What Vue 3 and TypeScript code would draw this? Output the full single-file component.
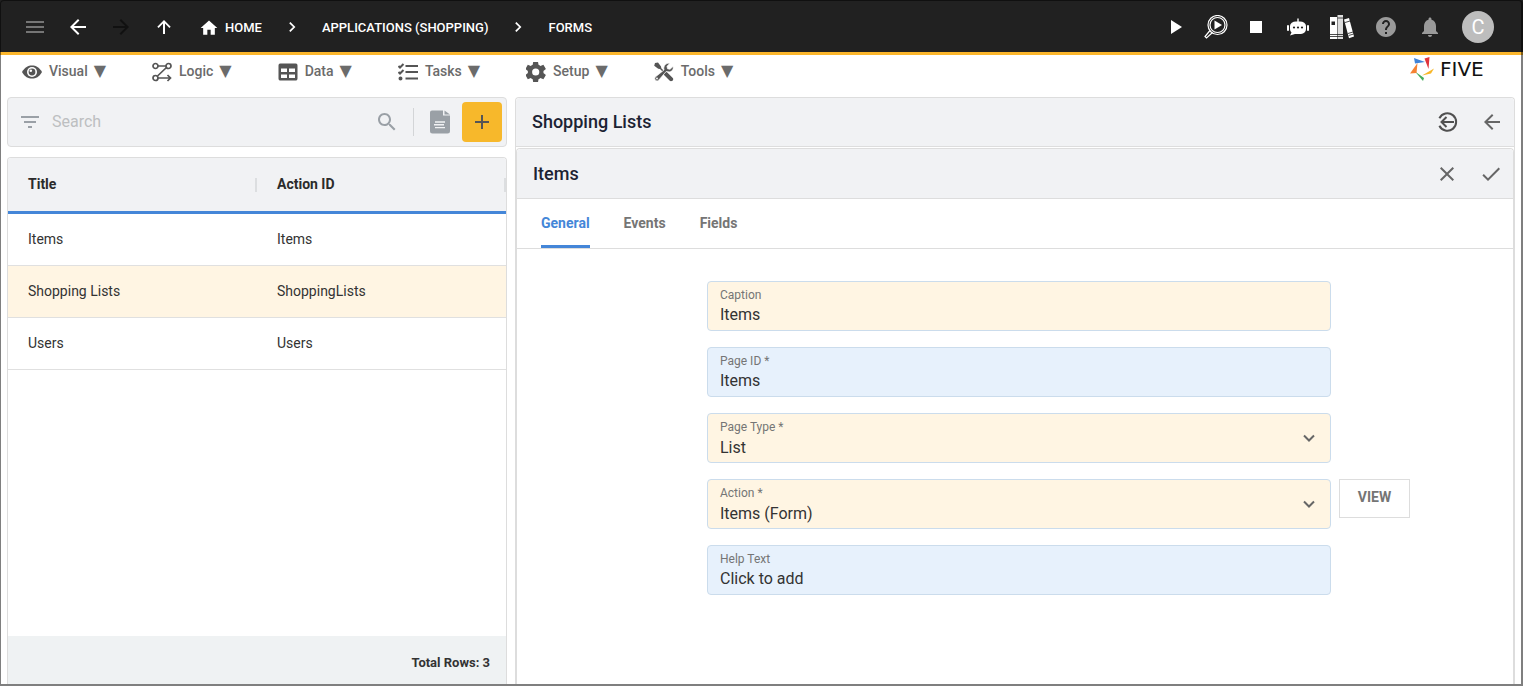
<script setup lang="ts">
import { ref } from 'vue'

interface Row { title: string; actionId: string }
interface MenuItem { label: string; icon: string }

const menus: MenuItem[] = [
  { label: 'Visual', icon: 'eye' },
  { label: 'Logic', icon: 'flow' },
  { label: 'Data', icon: 'grid' },
  { label: 'Tasks', icon: 'tasks' },
  { label: 'Setup', icon: 'gear' },
  { label: 'Tools', icon: 'tools' },
]
const rows: Row[] = [
  { title: 'Items', actionId: 'Items' },
  { title: 'Shopping Lists', actionId: 'ShoppingLists' },
  { title: 'Users', actionId: 'Users' },
]
const tabs = ['General', 'Events', 'Fields']
const selected = ref(1)
const activeTab = ref('General')
const search = ref('')
const caption = ref('Items')
const pageId = ref('Items')
const pageType = ref('List')
const action = ref('Items (Form)')
const helpText = ref('Click to add')
</script>

<template>
  <div class="app">
    <header class="topbar">
      <nav class="nav" aria-label="Navigation">
        <button class="icon-btn dim" aria-label="Menu">
          <svg viewBox="0 0 24 24"><path d="M3 18h18v-2H3v2zm0-5h18v-2H3v2zm0-7v2h18V6H3z" /></svg>
        </button>
        <button class="icon-btn" aria-label="Back">
          <svg viewBox="0 0 24 24"><path d="M20 11H7.800l5.600-5.600L12 4l-8 8 8 8 1.400-1.400L7.800 13H20z" /></svg>
        </button>
        <button class="icon-btn disabled" aria-label="Forward">
          <svg viewBox="0 0 24 24"><path d="M12 4l-1.400 1.400 5.600 5.600H4v2h12.200l-5.600 5.600L12 20l8-8z" /></svg>
        </button>
        <button class="icon-btn" aria-label="Up">
          <svg viewBox="0 0 24 24"><path d="M5.300 11.700l1.300 1.300L11 8.600V19h2V8.600l4.400 4.400 1.300-1.300L12 5z" /></svg>
        </button>
        <ol class="crumbs">
          <li>
            <a href="#" class="home">
              <svg viewBox="0 0 24 24"><path d="M10 20v-6h4v6h5v-8h3L12 3 2 12h3v8z" /></svg>HOME
            </a>
          </li>
          <li><svg class="sep" viewBox="0 0 16 16"><path d="M5.500 3L10.500 8l-5 5" /></svg><a href="#">APPLICATIONS (SHOPPING)</a></li>
          <li><svg class="sep" viewBox="0 0 16 16"><path d="M5.500 3L10.500 8l-5 5" /></svg><a href="#">FORMS</a></li>
        </ol>
      </nav>
      <div class="actions">
        <div class="run-group">
          <button class="icon-btn" aria-label="Run"><svg viewBox="0 0 24 24"><path d="M7 5v14l11-7z" /></svg></button>
          <button class="icon-btn" aria-label="Inspect">
            <svg viewBox="0 0 24 24" class="line">
              <circle cx="13.500" cy="10" r="9.500" /><circle cx="13.500" cy="10" r="7.500" />
              <path d="M6 15.500L1 21.500l1.500 1.500 6-5.500" /><path d="M10.500 5.500v9l7.500-4.500z" class="solid" />
            </svg>
          </button>
          <button class="icon-btn" aria-label="Stop"><svg viewBox="0 0 24 24"><path d="M6 6h12v12H6z" /></svg></button>
        </div>
        <div class="tool-group">
          <button class="icon-btn" aria-label="Assistant">
            <svg viewBox="0 0 24 24">
              <path d="M11.300 3.500h1.400v3.500h-1.400z" /><path d="M4 11a6 4.500 0 0 1 6-4.500h4a6 4.500 0 0 1 6 4.500v3a5 5 0 0 1-5 5H9l-5 1.500 1.500-3A5 5 0 0 1 4 14z" />
              <rect x="1" y="10" width="2" height="6" rx="1" /><rect x="21" y="10" width="2" height="6" rx="1" />
              <g fill="#212121"><circle cx="8" cy="12.500" r="1.100" /><circle cx="12" cy="12.500" r="1.100" /><circle cx="16" cy="12.500" r="1.100" /></g>
            </svg>
          </button>
          <button class="icon-btn" aria-label="Library">
            <svg viewBox="0 0 24 24">
              <path d="M0 2h7v22H0z" /><path d="M7.500 0h5.500v24H7.500z" fill="#dedede" /><path d="M14 4.500l5-1.500 5 18.500-5 1.700z" />
              <path d="M1.500 6.500h3.500v3.500h-3.500z" fill="#212121" />
              <path d="M0 19.500h13M0 21.500h13M7.500 3h5.500M15 7.500l5-1.500M18 18.500l5-1.500M18.700 20.500l5-1.500" stroke="#212121" stroke-width=".8" fill="none" />
            </svg>
          </button>
          <button class="icon-btn gray" aria-label="Help">
            <svg viewBox="0 0 24 24"><path d="M12 2C6.480 2 2 6.480 2 12s4.480 10 10 10 10-4.480 10-10S17.520 2 12 2zm1 17h-2v-2h2v2zm2.070-7.750l-.9.920C13.450 12.900 13 13.500 13 15h-2v-.5c0-1.100.45-2.100 1.170-2.830l1.240-1.260c.37-.36.59-.86.59-1.410 0-1.100-.9-2-2-2s-2 .9-2 2H8c0-2.210 1.790-4 4-4s4 1.790 4 4c0 .88-.36 1.680-.93 2.250z" /></svg>
          </button>
          <button class="icon-btn gray" aria-label="Notifications">
            <svg viewBox="0 0 24 24"><path d="M12 22c1.100 0 2-.9 2-2h-4c0 1.100.89 2 2 2zm6-6v-5c0-3.070-1.640-5.640-4.500-6.320V4c0-.83-.67-1.500-1.500-1.500s-1.500.67-1.500 1.500v.68C7.630 5.360 6 7.920 6 11v5l-2 2v1h16v-1l-2-2z" /></svg>
          </button>
          <button class="avatar" aria-label="Account">C</button>
        </div>
      </div>
    </header>

    <div class="menubar">
      <nav class="menus" aria-label="Main menu">
        <button v-for="m in menus" :key="m.label" class="menu">
          <svg v-if="m.icon === 'eye'" viewBox="0 0 20 20">
            <path d="M0 10C3 5 6 3.500 10 3.500S17 5 20 10c-3 5-6 6.500-10 6.500S3 15 0 10z" />
            <circle cx="10" cy="10" r="5" fill="#fff" /><circle cx="10" cy="10" r="3.400" /><circle cx="8.800" cy="8.800" r="1.300" fill="#fff" />
          </svg>
          <svg v-else-if="m.icon === 'flow'" viewBox="0 0 20 20" class="stroke thin">
            <circle cx="3.500" cy="4" r="2.500" /><circle cx="16.500" cy="4" r="2.500" /><circle cx="3.500" cy="16" r="2.500" />
            <path d="M6 4h8M14.500 5.500L5.500 14M6 16h12M15.500 13l3 3-3 3" />
          </svg>
          <svg v-else-if="m.icon === 'grid'" viewBox="0 0 20 20">
            <path fill-rule="evenodd" d="M3 1.500h14a2 2 0 0 1 2.500 2v13a2 2 0 0 1-2.500 2H3a2 2 0 0 1-2.500-2v-13A2 2 0 0 1 3 1.500zM3 6.500v3.500h6V6.500zm8 0v3.500h6V6.500zM3 12.500V16h6v-3.500zm8 0V16h6v-3.500z" />
          </svg>
          <svg v-else-if="m.icon === 'tasks'" viewBox="0 0 20 20" class="stroke">
            <path d="M7.500 4H20M7.500 10H20M7.500 16.500H20" /><path d="M.5 4l1.500 1.500L5.500 2M.5 10l1.500 1.500L5.500 8" /><circle cx="2.500" cy="16.500" r="1" />
          </svg>
          <svg v-else-if="m.icon === 'gear'" viewBox="2 2 20 20">
            <path d="M19.500 12c0-.4 0-.7-.1-1l2.500-2-2.500-4.300-3 1.200c-.6-.5-1.200-.8-1.900-1.100L14 1.800h-4.800l-.5 3c-.7.300-1.300.6-1.900 1.100l-3-1.200L1.400 9l2.500 2a8 8 0 0 0 0 2l-2.500 2 2.400 4.300 3-1.200c.6.5 1.200.8 1.900 1.100l.5 3H14l.5-3c.7-.3 1.300-.6 1.900-1.100l3 1.200 2.500-4.300-2.500-2c.1-.3.100-.6.100-1zm-7.800 3.600a3.600 3.600 0 1 1 0-7.200 3.600 3.600 0 0 1 0 7.200z" />
          </svg>
          <svg v-else viewBox="0 0 20 20">
            <path d="M1 1l3-.5 3 4 .3 1.800 4 4 1.500-.3 6 6c1.500 2-1.300 4-3 2.800l-6-6 .2-1.700-4-4-1.800-.3-4-3z" />
            <path d="M19 4.500c1 3-1.500 6-4.800 5.300l-2-.3L4.800 18c-1.800 2.500-5.500-.7-3.500-3L10 8c-1-4 2-7.500 5.700-6.500L13 4.300l.5 2.500 2.500.5z" stroke="#fff" stroke-width=".7" />
            <circle cx="3" cy="16.500" r=".9" fill="#fff" />
          </svg>
          <span class="label">{{ m.label }}<span class="arrow">▼</span></span>
        </button>
      </nav>
      <div class="brand">
        <svg viewBox="0 0 24 24" aria-hidden="true">
          <path d="M4 1l11 4-10 1.500z" fill="#3f83d8" /><path d="M14.500 1.500L19.500 0l-1 12z" fill="#e0343c" />
          <path d="M24 11.500l-3 5-9 2z" fill="#f8b729" /><path d="M5 14.500l9 6.500-1 3z" fill="#42ab5b" /><path d="M7.500 6L6.500 16l-6.500.5z" fill="#f58233" />
        </svg>
        <span>FIVE</span>
      </div>
    </div>

    <main class="workspace">
      <section class="list">
        <div class="searchbar">
          <svg class="filter" viewBox="0 0 24 24"><path d="M10 18h4v-2h-4v2zM3 6v2h18V6H3zm3 7h12v-2H6v2z" /></svg>
          <input v-model="search" type="search" placeholder="Search" aria-label="Search" />
          <button class="icon-btn find" aria-label="Find">
            <svg viewBox="0 0 24 24"><path d="M15.500 14h-.79l-.28-.27C15.410 12.590 16 11.110 16 9.500 16 5.910 13.090 3 9.500 3S3 5.910 3 9.500 5.910 16 9.500 16c1.610 0 3.090-.59 4.230-1.570l.27.28v.79l5 4.990L20.490 19l-4.990-5zm-6 0C7.010 14 5 11.990 5 9.500S7.010 5 9.500 5 14 7.010 14 9.500 11.990 14 9.500 14z" /></svg>
          </button>
          <span class="divider"></span>
          <button class="icon-btn doc" aria-label="Document">
            <svg viewBox="0 0 24 24"><path d="M4 .5h11v5h7v15.500a2.500 2.500 0 0 1-2.500 2.500H4.500A2.500 2.500 0 0 1 2 21V2.500a2 2 0 0 1 2-2z" /><path d="M16.500 .5l5.500 4h-5.500z" /><path d="M7 12h10M6 14.800h10M7 17.600h10" stroke="#f1f2f4" stroke-width="1.400" /></svg>
          </button>
          <button class="add" aria-label="Add"><svg viewBox="0 0 24 24"><path d="M19 13h-6v6h-2v-6H5v-2h6V5h2v6h6z" /></svg></button>
        </div>
        <div class="table-card">
          <table>
            <thead><tr><th scope="col">Title</th><th scope="col">Action ID</th></tr></thead>
            <tbody>
              <tr v-for="(r, i) in rows" :key="r.title" :class="{ selected: i === selected }" @click="selected = i">
                <td>{{ r.title }}</td><td>{{ r.actionId }}</td>
              </tr>
            </tbody>
          </table>
          <footer>Total Rows: {{ rows.length }}</footer>
        </div>
      </section>

      <section class="detail">
        <div class="bar">
          <h1>Shopping Lists</h1>
          <button class="icon-btn dark" aria-label="Exit">
            <svg viewBox="0 0 24 24"><path d="M3.400 8.200A8.800 8.800 0 1 1 3.400 15.800M18 12H5M10.500 7L5.500 12l5 5" fill="none" stroke="currentColor" stroke-width="2" /></svg>
          </button>
          <button class="icon-btn" aria-label="Back to list">
            <svg viewBox="0 0 24 24"><path d="M20 11H7.800l5.600-5.600L12 4l-8 8 8 8 1.400-1.400L7.800 13H20z" /></svg>
          </button>
        </div>
        <div class="page">
          <div class="bar inner">
            <h2>Items</h2>
            <button class="icon-btn" aria-label="Cancel"><svg viewBox="0 0 24 24"><path d="M19 6.400L17.600 5 12 10.600 6.400 5 5 6.400l5.600 5.600L5 17.600 6.400 19l5.600-5.600 5.600 5.600 1.400-1.400-5.600-5.600z" /></svg></button>
            <button class="icon-btn" aria-label="Save"><svg viewBox="0 0 24 24"><path d="M9 16.200L4.800 12l-1.400 1.400L9 19 21 7l-1.400-1.400z" /></svg></button>
          </div>
          <div class="tabs" role="tablist">
            <button v-for="t in tabs" :key="t" role="tab" :aria-selected="t === activeTab" :class="{ active: t === activeTab }" @click="activeTab = t">{{ t }}</button>
          </div>
          <form class="form" @submit.prevent>
            <div class="field warm"><label for="caption">Caption</label><input id="caption" v-model="caption" type="text" /></div>
            <div class="field"><label for="page-id">Page ID *</label><input id="page-id" v-model="pageId" type="text" /></div>
            <div class="field warm">
              <label for="page-type">Page Type *</label>
              <select id="page-type" v-model="pageType"><option>List</option></select>
              <svg class="caret" viewBox="0 0 24 24"><path d="M7 9.500l5 5 5-5" /></svg>
            </div>
            <div class="field warm">
              <label for="action">Action *</label>
              <select id="action" v-model="action"><option>Items (Form)</option></select>
              <svg class="caret" viewBox="0 0 24 24"><path d="M7 9.500l5 5 5-5" /></svg>
            </div>
            <button class="view" type="button">VIEW</button>
            <div class="field"><label for="help">Help Text</label><input id="help" v-model="helpText" type="text" /></div>
          </form>
        </div>
      </section>
    </main>
  </div>
</template>

<style>
body { margin: 0; background: #fff; }
</style>

<style scoped>
* { box-sizing: border-box; }
.app {
  position: relative; display: flex; flex-direction: column; min-height: 100vh;
  font-family: Roboto, "Liberation Sans", sans-serif; color: #333; font-size: 14px;
}
.app::after {
  content: ""; position: absolute; inset: 0; pointer-events: none;
  border: solid rgba(0, 0, 0, 0.5); border-width: 1px 2px 2px 1px; border-radius: 4px 4px 0 0;
}
button { font: inherit; color: inherit; background: none; border: 0; padding: 0; cursor: pointer; }
svg { display: block; fill: currentColor; flex: none; }
a { color: inherit; text-decoration: none; }
.icon-btn { width: 24px; height: 24px; flex: none; }
.icon-btn svg { width: 24px; height: 24px; }

.topbar {
  display: flex; align-items: center; justify-content: space-between; height: 55px;
  padding: 2px 29px 0 23px; background: #212121; border-bottom: 3px solid #fbb62c; color: #fff;
}
.nav { display: flex; align-items: center; gap: 19px; }
.dim { color: #757575; }
.disabled { color: #111; }
.gray { color: #9a9a9a; }
.crumbs { display: flex; align-items: center; gap: 23px; list-style: none; margin: 0 0 0 4px; padding: 0; font-size: 13px; font-weight: 500; }
.crumbs li { display: flex; align-items: center; gap: 23px; }
.crumbs a { line-height: 20px; padding-top: 1px; }
.home { display: flex; align-items: center; gap: 6px; }
.home svg { width: 20px; height: 20px; }
.sep { width: 14px; height: 14px; fill: none; stroke: #fff; stroke-width: 2; }
.actions { display: flex; align-items: center; gap: 18px; }
.run-group { display: flex; align-items: center; gap: 16px; }
.tool-group { display: flex; align-items: center; gap: 20px; }
.line { fill: none; stroke: #fff; stroke-width: 1.2; }
.line .solid { fill: #fff; stroke: none; }
.avatar { width: 32px; height: 32px; border-radius: 50%; background: #bdbdbd; color: #fff; font-size: 20px; line-height: 32px; }

.menubar { display: flex; justify-content: space-between; align-items: flex-start; height: 42px; padding: 4px 24px 0 22px; }
.menus { display: flex; gap: 46px; padding-top: 3px; }
.menu { display: flex; align-items: center; gap: 7px; height: 20px; font-size: 14px; font-weight: 500; color: #6b6b6b; }
.menu svg { width: 20px; height: 20px; color: #555; }
.menu .stroke { fill: none; stroke: #555; stroke-width: 2; }
.menu .thin { stroke-width: 1.7; }
.label { display: flex; align-items: center; gap: 6px; height: 20px; line-height: 18px; padding-bottom: 2px; }
.arrow { font: 16px/18px "DejaVu Sans", sans-serif; }
.brand { display: flex; align-items: center; gap: 6px; height: 20px; font: 20px/20px "DejaVu Sans", sans-serif; color: #111; }
.brand svg { width: 24px; height: 24px; }
.brand span { width: 59px; }

.workspace { flex: 1; display: grid; grid-template-columns: 1fr 2fr; gap: 8px; padding: 0 8px 2px 7px; }
.list { display: flex; flex-direction: column; gap: 10px; min-width: 0; }
.searchbar { display: flex; align-items: center; height: 50px; padding: 0 4px 0 10px; background: #f1f2f4; border: 1px solid #ddd; border-radius: 4px; }
.filter { width: 24px; height: 24px; color: #9aa0a6; }
.searchbar input { flex: 1; min-width: 0; height: 32px; margin: 0 8px 0 10px; padding: 0 0 2px; border: 0; outline: 0; background: none; font: 16px Roboto, sans-serif; color: #333; }
.searchbar input::placeholder { color: #bdbfc1; opacity: 1; }
.find, .doc { color: #9aa0a6; }
.divider { width: 1px; height: 28px; margin: 0 14px; background: #d3d5d7; }
.add { display: grid; place-items: center; width: 40px; height: 40px; margin-left: 10px; border-radius: 4px; background: #f7b82b; color: #555; }
.add svg { width: 24px; height: 24px; }
.table-card { flex: 1; display: flex; flex-direction: column; border: 1px solid #ddd; border-bottom: 0; border-radius: 4px 4px 0 0; overflow: hidden; }
table { width: 100%; border-collapse: separate; border-spacing: 0; table-layout: fixed; }
th { position: relative; height: 56px; padding: 0 20px 2px; text-align: left; font-weight: 700; color: #2b2b2b; background: #f1f2f4; border-bottom: 3px solid #4486d8; }
th::after { content: ""; position: absolute; right: 0; top: 20px; width: 2px; height: 14px; background: #dcdee0; }
td { height: 52px; padding: 0 20px 2px; border-bottom: 1px solid #e0e0e0; }
.selected td { background: #fff5e3; }
footer { margin-top: auto; height: 48px; padding: 3px 16px 0; line-height: 48px; text-align: right; font-size: 13px; font-weight: 700; background: #eff2f3; }

.detail { display: flex; flex-direction: column; min-width: 0; border: 1px solid #ddd; border-bottom: 0; border-radius: 4px 4px 0 0; }
.bar { display: flex; align-items: center; gap: 20px; height: 49px; padding: 0 10px 0 16px; background: #f1f2f4; border-bottom: 1px solid #ddd; border-radius: 4px 4px 0 0; color: #666; }
.bar.inner { height: 50px; }
.dark { color: #505050; }
h1, h2 { flex: 1; margin: 0; font-size: 18px; line-height: 24px; font-weight: 500; color: #1c2333; }
.page { flex: 1; display: flex; flex-direction: column; margin-top: 1px; border: 1px solid #ddd; border-bottom: 0; border-radius: 4px 4px 0 0; }
.tabs { display: flex; gap: 34px; height: 50px; padding: 0 24px; border-bottom: 1px solid #ddd; }
.tabs button { padding-top: 2px; border-bottom: 3px solid transparent; font-weight: 700; color: #757575; }
.tabs .active { color: #4486d8; border-color: #4486d8; }
.form { display: grid; grid-template-columns: 1fr minmax(0, 624px) 1fr; gap: 16px 8px; padding: 32px 0 32px 8px; }
.field { grid-column: 2; position: relative; display: flex; flex-direction: column; height: 50px; padding: 5px 12px 0; background: #e7f1fc; border: 1px solid #cbdcec; border-radius: 4px; }
.warm { background: #fff5e3; }
.field label { font-size: 12px; line-height: 16px; color: #757575; }
.field input, .field select { width: 100%; height: 24px; padding: 0; border: 0; outline: 0; background: none; appearance: none; font: 16px/24px Roboto, sans-serif; color: #333; }
.field select { height: 26px; }
.caret { position: absolute; right: 9px; top: 12px; width: 24px; height: 24px; fill: none; stroke: #666; stroke-width: 2; pointer-events: none; }
.view { grid-column: 3; justify-self: start; width: 71px; height: 39px; padding-bottom: 3px; border: 1px solid #ddd; background: #fff; font-weight: 700; color: #757575; }
</style>
